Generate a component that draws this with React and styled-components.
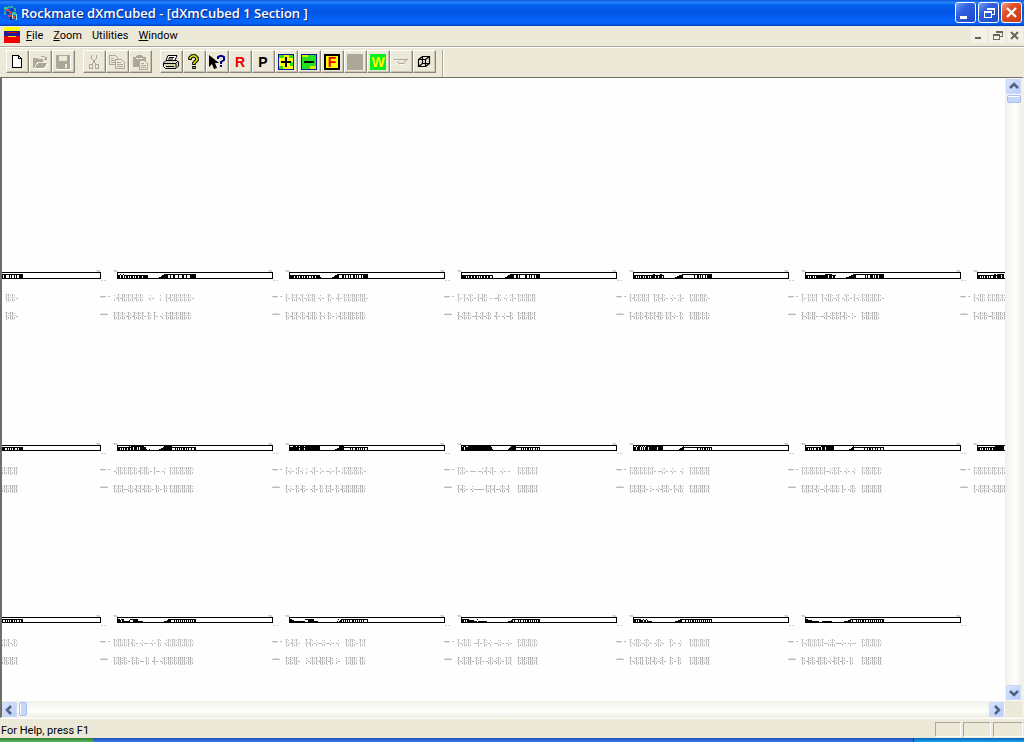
import React from "react";
import styled, { createGlobalStyle } from "styled-components";

const sections = [
  [
    {
      deck: "                                                         5=55===5=5==5=5==5555",
      top: "                             :  ||:|:. ",
      low: "                             |  |:||:. ",
    },
    {
      deck: "544=44=4-44-4-44-4-44-444-44444         11223445555==5==55===5===55==5===555555",
      top: ":.|.||:|:|.|:|:  .:.   :  |.|:||:|:|:|:. ",
      low: "|:|:|:.|:.|:|:|. |: |. .: |:||:|:|||:|: ",
    },
    {
      deck: "54444-44-4-44-4-44-4--4-44-444421 111    112234455===55=5==5=5==55=5=5==5=55555",
      top: "|. |:|.:|.:|:|| .:.  |:. .|. |:|:|||:|||. ",
      low: "|:.|:|.:|:.|:||: |.: |:. :.|:|:|||:|:||: ",
    },
    {
      deck: "54444-4-44-44-44-4-4-44-44-44--4         111223445555==55=5=====55==5=5==5=5555",
      top: "|. |.:|:. |.||: . ..|: .: :|. |:|:||:|| ",
      low: "|.:|:|:..|.:|.:|: .|. .:..|:  |:||:||:| ",
    },
    {
      deck: "544-4-4-44-4-44-4-4455-44-455-4         1122334445===========5==55=5=5==5=55555",
      top: "|.|:|:||:|  |:|.|:. .:. :|.   |:||:|||:. ",
      low: "|.:|:|:.|:|:|.||: |:|.:. |:   |:|||:|:|: ",
    },
    {
      deck: "544-4-44-4-444444444555=555-44-        112223344555=========5=5==555=5=55=55555",
      top: "|. |:|:|  |.:||:.:| .:|:. |.: |:||:||:|:. ",
      low: "|.:|:||. ..:|.:|:|:|.|:. :.   |:||:|||: ",
    },
    {
      deck: "544-4-4-44-4-4--455-5555=55",
      top: "|.:||: |:|:||:|:",
      low: "|.:|:|:..|:|||:|",
    },
  ],
  [
    {
      deck: "                                                         444--4-4-4-44--4-4444",
      top: "                             |:|:||:||",
      low: "                             |:||:|||| ",
    },
    {
      deck: "544-4-4-44-45-55=555=5=5555442112        12233455555555---4-4-4-4-44-4-4--4--44",
      top: ".:||:|:||:|:.|:||:. |.. .:  |:||:||:|||: ",
      low: "|:|:|..:|:.|:|.|:|:. |:. |: |:|||:||:||: ",
    },
    {
      deck: "5444555455-5555-5555555555555551             1223355555------4-4--44-4-4-4-4--4",
      top: "|.:. :|.: : .:|. :. ..:. |. :|:||:||:|:. ",
      low: "|.:. |:.|:. .:|. |: |:|. |:.|:||:|||:||: ",
    },
    {
      deck: "545=54455555555555555555555555421             123455555-----4-4-4-44-4-4--4-4-4",
      top: "|:|:. ... ..:.|.:|.  .:. .    |:|:||:|:| ",
      low: "|.|:. .:..... |:|.|..:|:.|    |:|||:||:| ",
    },
    {
      deck: "544=455=4=4=455=55555555=555551              123345-------------4--4-4-44-4-4-4",
      top: "|:||:|:|:|:|. ..::. .:.  .:   |:||:||:|| ",
      low: "|:|:||:|. :. .:.|:|:. |.:|:   |:||:|||:| ",
    },
    {
      deck: "544-4-4-4--44-44=555=55555555              122345----------4--4-44-4--4-4--4--4",
      top: "|:|:||:|:|:|..::|:|. .:. .:   |:||:||:|: ",
      low: "|:||:|.|:..:|.:|:|: |. .:|:   |:||:||:|| ",
    },
    {
      deck: "544-4-44-4-4-44-44555555555",
      top: "|:||:|:|:||:|:|:",
      low: "|.:|:|:|.:|:||:|",
    },
  ],
  [
    {
      deck: "                                                         4--4-4-4-44-4-4--4-44",
      top: "                             |:|:|.:|: ",
      low: "                             |:||:||:| ",
    },
    {
      deck: "5443-44222223---4444422222111                 12223444---4-4-4-4-4-4-4-4-4-4-44",
      top: "|:||:|:|.|:. .:.. .:. |: .:|:||:||:||:|: ",
      low: "|:||:|:. |:|:.. |: .|. .:|:||:|:||||:||: ",
    },
    {
      deck: "5443322222222222---44444422221111              12-234-4-4-4-4--44-4-4-4-4-4---4",
      top: "|:.|:|.   |.|:.:..::..:. .:   |:||:. |:| ",
      low: "|:|:||.   :.:|:|.||:|.|: :.   |:|||: ||: ",
    },
    {
      deck: "544-4-4433333222-22222222211111               122234-4---4-4--4-4-44-4-4-4-4-44",
      top: "|.:|:|: ..|. |:.: ..::. .:.   |:||:||:|: ",
      low: "|.:|:||. |:|. .:|:.:|:. |:|   |:||:|||:| ",
    },
    {
      deck: "544-4-4433-33-3222211111               1112223344---4--4-4-44-4-4-4-4-4-4-4-4-4",
      top: "|.:||:.:|:. .:|:.   |:. .:    |:||:||:|| ",
      low: "|.:|:|| |:|.|:.:|.  |:. |:    |:||:||:|| ",
    },
    {
      deck: "5443333222222211122222222221111111111112222334-4---4-4-4-44-4--4-4-4-4-4-4-4-44",
      top: "|.:||:|:|:|..::|:...:. .:..   |:||:||:|: ",
      low: "|:.|:|:.||:|:.:.|:|.|:. |:    |:||:||:|| ",
    },
  ],
];

const menus = [
  ["F", "ile"],
  ["Z", "oom"],
  ["", "Utilities"],
  ["W", "indow"],
];

const toolGroups = [
  [
    ["New", NewIcon],
    ["Open", OpenIcon, true],
    ["Save", SaveIcon, true],
  ],
  [
    ["Cut", CutIcon, true],
    ["Copy", CopyIcon, true],
    ["Paste", PasteIcon, true],
  ],
  [
    ["Print", PrintIcon],
    ["About", AboutIcon],
    ["Context help", ContextHelpIcon],
    ["R", () => <Letter color="#f00000">R</Letter>],
    ["P", () => <Letter color="#000">P</Letter>],
    ["Plus", PlusIcon],
    ["Minus", MinusIcon],
    ["F", () => <Letter color="#f00000" $back="#ff0" $edge="#000">F</Letter>],
    ["Blank", () => <Letter $back="#aca899" />],
    ["W", () => <Letter color="#ff0" $back="#00f020">W</Letter>],
    ["Level", LevelIcon],
    ["Cube", CubeIcon],
  ],
];

export default function App() {
  return (
    <>
      <GlobalStyle />
      <Frame>
        <TitleBar>
          <LogoIcon />
          <Title>Rockmate dXmCubed - [dXmCubed 1 Section ]</Title>
          <CaptionButton aria-label="Minimize">
            <svg width="19" height="19"><path d="M4 13h7v3H4z" fill="#fff" /></svg>
          </CaptionButton>
          <CaptionButton aria-label="Restore">
            <RestoreGlyph color="#fff" size={16} />
          </CaptionButton>
          <CaptionButton aria-label="Close" $danger>
            <svg width="19" height="19"><path d="M5 5l9 9M14 5l-9 9" stroke="#fff" strokeWidth="2.3" /></svg>
          </CaptionButton>
        </TitleBar>

        <MenuBar>
          <FlagIcon />
          <Menus>
            {menus.map(([key, rest]) => (
              <MenuItem key={rest}>
                <u>{key}</u>
                {rest}
              </MenuItem>
            ))}
          </Menus>
          <ChildButton aria-label="Minimize section">
            <svg width="15" height="16"><path d="M4 10h6v2H4z" fill="#666357" /></svg>
          </ChildButton>
          <ChildButton aria-label="Restore section">
            <RestoreGlyph color="#666357" size={15} />
          </ChildButton>
          <ChildButton aria-label="Close section">
            <svg width="15" height="16"><path d="M4 5l7 7M11 5l-7 7" stroke="#666357" strokeWidth="2" /></svg>
          </ChildButton>
        </MenuBar>

        <ToolBar>
          {toolGroups.map((group, i) => (
            <ToolGroup key={i}>
              {group.map(([name, Icon, off]) => (
                <ToolButton key={name} aria-label={name} disabled={off}>
                  <Icon />
                </ToolButton>
              ))}
            </ToolGroup>
          ))}
          <ToolEnd />
        </ToolBar>

        <Client>
          <Canvas>
            {sections.map((row, i) => (
              <SectionRow key={i} $tall={i === 0}>
                {row.map((section, j) => (
                  <Section key={j} {...section} depth={i === 0 ? 7 : 6} />
                ))}
              </SectionRow>
            ))}
          </Canvas>
          <VScroll>
            <ScrollButton aria-label="Scroll up"><Chevron d="M4 9l4-4 4 4" /></ScrollButton>
            <VThumb />
            <Track />
            <ScrollButton aria-label="Scroll down"><Chevron d="M4 6l4 4 4-4" /></ScrollButton>
          </VScroll>
          <HScroll>
            <ScrollButton aria-label="Scroll left"><Chevron d="M9 4L5 8l4 4" /></ScrollButton>
            <HThumb />
            <Track />
            <ScrollButton aria-label="Scroll right"><Chevron d="M6 4l4 4-4 4" /></ScrollButton>
          </HScroll>
          <Corner />
        </Client>

        <StatusBar>
          <Help>For Help, press F1</Help>
          <Pane $width={26} />
          <Pane $width={28} />
          <Pane $width={30} />
        </StatusBar>
        <TaskBar>
          <Start />
          <Tasks />
          <Tray />
        </TaskBar>
      </Frame>
    </>
  );
}

// digit: solid column of that height, "=" and "-": roof of the deck
function deckPath(deck, depth) {
  return [...deck]
    .map((c, x) => {
      if (c === " ") return "";
      if (c === "=") return `M${x} ${depth - 5}h1v1h-1z`;
      if (c === "-") return `M${x} ${depth - 4}h1v1h-1z`;
      return `M${x} ${depth - c}h1v${c}h-1z`;
    })
    .join("");
}

function marksPath(marks, y) {
  return [...marks]
    .map((c, i) => {
      const x = i * 2;
      if (c === "|") return `M${x} ${y}h1v3h-1zM${x} ${y + 4}h1v3h-1z`;
      if (c === ":") return `M${x} ${y + 1}h1v1h-1zM${x} ${y + 5}h1v2h-1z`;
      if (c === ".") return `M${x} ${y + 4}h2v1h-2z`;
      return "";
    })
    .join("");
}

// pale crossbars that join the strokes of the figures
function joinsPath(marks, y) {
  return [...marks]
    .map((c, i) => {
      const x = i * 2;
      if (c === "|") return `M${x - 1} ${y}h3v1h-3zM${x - 1} ${y + 3}h3v1h-3zM${x} ${y + 7}h2v1h-2z`;
      if (c === ":") return `M${x} ${y + 3}h2v1h-2z`;
      return "";
    })
    .join("");
}

function Section({ deck, top, low, depth }) {
  return (
    <Drawing width="172" height="56" viewBox="-17 -4 172 56" overflow="visible">
      <path d="M-4 -1.500h4M-3 -.5h4M151 -1.500h4M152 -.5h3M156 8.500h2M159 8.500h2" stroke="#cfcfcf" />
      <path d={`M.5 .5h155v${depth - 1}H.5z`} fill="none" stroke="#000" />
      <path d={deckPath(deck, depth)} />
      <g transform="translate(-3 0)">
        <path d={joinsPath(top, 22)} fill="#e2e2e2" />
        <path d={joinsPath(low, 40)} fill="#dcdcdc" />
        <path d={marksPath(top, 22)} fill="#bcbcbc" />
        <path d={marksPath(low, 40)} fill="#b2b2b2" />
      </g>
      <path d="M-17 24.500h6M-9 24.500h2M-17 42.500h8" stroke="#bdbdbd" />
      <path d="M-16 25.500h4M-16 41.500h6" stroke="#dedede" />
    </Drawing>
  );
}

function LogoIcon() {
  return (
    <Drawing width="16" height="16">
      <path d="M1 2h4v3H1zM9 7h4v3H9z" fill="#2fc98a" />
      <path d="M5 1h5v2H5zM1 6h2v4H1zM11 3h2v3h-2z" fill="#35a7a0" />
      <path d="M3 4h3v2H3zM6 6h2v3H6zM5 10h3v2H5zM10 11h2v3h-2z" fill="#d8455b" />
      <path d="M4 7h2v2H4zM8 4h2v2H8zM7 12h3v3H7z" fill="#122c6b" />
      <path d="M9 9h1v5H9zM13 9h1v6h-1z" fill="#9fe8d0" />
    </Drawing>
  );
}

function FlagIcon() {
  return (
    <Drawing width="16" height="16">
      <path d="M0 0h16v5H0z" fill="#ff0" />
      <path d="M0 4h16v6H0z" fill="#1a1c9c" />
      <path d="M0 9h16v7H0z" fill="#f00000" />
      <path d="M3 5h10v1H3zM4 9h8v2H4z" fill="#f00000" />
      <path d="M4 9h8v1H4z" fill="#ffd800" />
    </Drawing>
  );
}

function RestoreGlyph({ color, size }) {
  return (
    <Glyph width={size} height={size} viewBox="0 0 16 16">
      <path d="M6.500 5V3.500h7v6H11" fill="none" stroke={color} />
      <path d="M6 3h8v2H6zM3 6h8v2H3z" fill={color} />
      <path d="M3.500 7v5.500h7V7" fill="none" stroke={color} />
    </Glyph>
  );
}

function NewIcon() {
  return (
    <Drawing width="16" height="16">
      <path d="M3.500 1.500h6l3 3v9h-9z" fill="#fff" stroke="#000" />
      <path d="M9.500 1.500v3h3" fill="none" stroke="#000" />
    </Drawing>
  );
}

function OpenIcon() {
  return (
    <Drawing width="16" height="16">
      <path d="M1 4h4l1 1h5v3H5l-3 6H1zM6 9h10l-4 5H3zM9 2h4v1h2v3h-3V5h1V3H9z" fill="#aca899" />
      <path d="M3 14h10l3-5" fill="none" stroke="#fff" />
    </Drawing>
  );
}

function SaveIcon() {
  return (
    <Drawing width="16" height="16">
      <path d="M1 1h14v14H2l-1-1zM4 2v5h8V2zM10 10v4h2v-4z" fill="#aca899" fillRule="evenodd" />
      <path d="M2 15.500h13.500V2" fill="none" stroke="#fff" />
    </Drawing>
  );
}

function CutIcon() {
  return (
    <Drawing width="16" height="16">
      <g fill="none" stroke="#aca899">
        <path d="M5.500 1v3l4 6M10.500 1v3l-4 6" />
        <path d="M3.500 10.500h3v4h-3zM9.500 10.500h3v4h-3z" />
      </g>
    </Drawing>
  );
}

function CopyIcon() {
  return (
    <Drawing width="16" height="16">
      <g fill="#ece9d8" stroke="#aca899">
        <path d="M.5 1.500h6l2 2v7h-8zM2 4.500h3M2 6.500h5M2 8.500h5" />
        <path d="M6.500 5.500h6l3 3v6h-9zM8 8.500h4M8 10.500h6M8 12.500h6" />
      </g>
    </Drawing>
  );
}

function PasteIcon() {
  return (
    <Drawing width="16" height="16">
      <path d="M1 3h3l1-2h5l1 2h3v10H1z" fill="#aca899" />
      <path d="M4 4h7" stroke="#ece9d8" />
      <path d="M7.500 6.500h5l3 3v6h-8zM9 9.500h3M9 11.500h5M9 13.500h5" fill="#ece9d8" stroke="#aca899" />
    </Drawing>
  );
}

function PrintIcon() {
  return (
    <svg width="16" height="16">
      <path d="M5 1.500h9l-2 5H3z" fill="#fff" stroke="#000" />
      <path d="M3 6.500h11l1.500 1.500v4L13 14.500H2.500l-2-2V9z" fill="#d8d4c2" stroke="#000" />
      <path d="M1 9.500h12v4M13 9l2-2M3 12.500h8M6 3.500h5M5 5h5" fill="none" stroke="#000" />
      <path d="M8 11h3" stroke="#e8e000" />
    </svg>
  );
}

function AboutIcon() {
  return (
    <svg width="16" height="16">
      <path d="M4 6V4l2-2h3l2 2v2L8 9v2M8 12v3" fill="none" stroke="#000" strokeWidth="3.600" />
      <path d="M4 5V4l2-2h3l2 2v2L8 9v1M8 13v1" fill="none" stroke="#f4f000" strokeWidth="1.500" />
    </svg>
  );
}

function ContextHelpIcon() {
  return (
    <svg width="16" height="16">
      <path d="M0 1v12l3-3 2 5 3-1-2-5h4z" fill="#000" />
      <path d="M9 5V3l2-1h2l2 1v3l-3 2v2M12 11v2" fill="none" stroke="#000080" strokeWidth="2" />
    </svg>
  );
}

function PlusIcon() {
  return (
    <Drawing width="16" height="16">
      <path d="M.5 .5h15v15H.5z" fill="#ff0" stroke="#0a12a0" />
      <path d="M1 1h5v3H1zM12 8h3v4h-3zM1 12h4v3H1zM11 1h4v3h-4z" fill="#30e010" />
      <path d="M7 3h2v4h4v2H9v4H7V9H3V7h4z" fill="#000" />
    </Drawing>
  );
}

function MinusIcon() {
  return (
    <Drawing width="16" height="16">
      <path d="M.5 .5h15v15H.5z" fill="#20e020" stroke="#0a12a0" />
      <path d="M1 1h6v2H1zM9 12h6v3H9z" fill="#d8f000" />
      <path d="M3 7h10v2H3z" fill="#000" />
    </Drawing>
  );
}

function LevelIcon() {
  return (
    <svg width="16" height="16">
      <path d="M1 5.500h14M4 6l2 3.500h5L13 6" fill="none" stroke="#aca899" />
      <path d="M2 6.500h3M6 10.500h5" stroke="#fff" />
    </svg>
  );
}

function CubeIcon() {
  return (
    <svg width="16" height="16">
      <path d="M2.500 5.500h7v7h-7zM6.500 2.500h7v7h-7zM2.500 5.500l4-3M9.500 5.500l4-3M2.500 12.500l4-3M9.500 12.500l4-3" fill="none" stroke="#000" strokeWidth="1.200" />
    </svg>
  );
}

function Chevron({ d }) {
  return (
    <svg width="15" height="15">
      <path d={d} fill="none" stroke="#4d6185" strokeWidth="2.500" />
    </svg>
  );
}

const GlobalStyle = createGlobalStyle`
  * {
    box-sizing: border-box;
  }
  body {
    margin: 0;
    font-family: Roboto, "Liberation Sans", sans-serif;
    font-size: 11px;
    color: #000;
  }
  button {
    padding: 0;
    border: none;
    font: inherit;
    color: inherit;
  }
  svg {
    display: block;
    flex: none;
  }
`;

const Frame = styled.div`
  display: flex;
  flex-direction: column;
  height: 100vh;
  overflow: hidden;
  background-color: #ece9d8;
`;

const Drawing = styled.svg`
  shape-rendering: crispEdges;
`;

const Glyph = styled(Drawing)`
  margin: 0 auto;
`;

const TitleBar = styled.header`
  display: flex;
  align-items: center;
  gap: 2px;
  height: 26px;
  padding: 0 2px 1px 3px;
  background: linear-gradient(
    #0a50d8 0%,
    #2a86fa 8%,
    #0560ee 20%,
    #0455e4 50%,
    #0464fc 75%,
    #0462f6 90%,
    #0340c0 100%
  );
`;

const Title = styled.h1`
  flex: 1;
  margin: 0;
  font-family: "Open Sans", "Noto Sans", sans-serif;
  font-size: 13px;
  font-weight: 600;
  line-height: 24px;
  color: #fff;
  text-shadow: 1px 1px #0a2a80;
  white-space: nowrap;
`;

const CaptionButton = styled.button`
  display: flex;
  align-items: center;
  justify-content: center;
  width: 21px;
  height: 21px;
  border: 1px solid #fff;
  border-radius: 3px;
  background: ${(props) =>
    props.$danger
      ? "linear-gradient(135deg, #f0a088, #e04f28 35%, #c83c14)"
      : "linear-gradient(135deg, #7aa2f4, #2f62e0 35%, #1b48c8)"};
`;

const MenuBar = styled.nav`
  display: flex;
  align-items: center;
  gap: 2px;
  height: 21px;
  padding: 0 1px 2px 4px;
  border-bottom: 1px solid #aca899;
`;

const Menus = styled.div`
  display: flex;
  flex: 1;
`;

const MenuItem = styled.button`
  padding: 1px 5px 0;
  background: none;
  line-height: 17px;
  &:first-child {
    padding-left: 4px;
  }
`;

const ChildButton = styled.button`
  width: 16px;
  height: 16px;
  background-color: #f4f2e8;
`;

const ToolBar = styled.div`
  display: flex;
  gap: 8px;
  height: 30px;
  padding: 2px 6px 5px;
  border-top: 1px solid #fff;
`;

const ToolGroup = styled.div`
  display: flex;
`;

const ToolButton = styled.button`
  display: flex;
  align-items: center;
  justify-content: center;
  width: 23px;
  height: 23px;
  padding-right: 1px;
  border: 1px solid;
  border-color: #fff #8a8778 #8a8778 #fff;
  background-color: #ece9d8;
  box-shadow: inset -1px -1px #c8c4b2;
`;

const ToolEnd = styled.div`
  width: 2px;
  height: 27px;
  margin-left: -2px;
  border-left: 1px solid #aca899;
  background-color: #fff;
`;

const Letter = styled.span`
  display: flex;
  justify-content: center;
  width: 16px;
  height: 16px;
  border: 2px solid ${(props) => props.$edge || "transparent"};
  background-color: ${(props) => props.$back || "transparent"};
  color: ${(props) => props.color};
  font-family: "Liberation Sans", sans-serif;
  font-size: 14px;
  font-weight: 700;
  line-height: 13px;
`;

const Client = styled.main`
  display: grid;
  flex: 1;
  min-height: 0;
  grid-template-columns: 1fr 17px;
  grid-template-rows: 1fr 16px;
  border: 1px solid;
  border-color: #716f64 #f4f2e8 #f4f2e8 #716f64;
  border-width: 1px 2px 1px 2px;
  background-color: #fff;
`;

const Canvas = styled.div`
  display: flex;
  flex-direction: column;
  gap: 116px;
  min-width: 0;
  padding-top: 190px;
  overflow: hidden;
  background-color: #fefefe;
`;

const SectionRow = styled.div`
  display: flex;
  height: ${(props) => (props.$tall ? 57 : 56)}px;
  margin-left: -74px;
`;

const VScroll = styled.div`
  display: flex;
  flex-direction: column;
  align-items: center;
  padding: 1px 0;
  background: linear-gradient(to right, #f0f0ea, #fefefb 60%, #f0f0ea);
`;

const HScroll = styled.div`
  display: flex;
  align-items: center;
  padding-right: 1px;
  background: linear-gradient(#f0f0ea, #fefefb 60%, #f0f0ea);
`;

const ScrollButton = styled.button`
  width: 15px;
  height: 15px;
  border-radius: 2px;
  background: linear-gradient(135deg, #dbe5fe, #b8ccf8);
  box-shadow: inset 0 0 0 1px #cbd8fa;
`;

const Track = styled.div`
  flex: 1;
`;

const VThumb = styled.div`
  width: 14px;
  height: 8px;
  margin-top: 1px;
  border: 1px solid #a9bdf0;
  border-radius: 2px;
  background-color: #c6d5fc;
  box-shadow: inset 0 1px #fff;
`;

const HThumb = styled.div`
  width: 8px;
  height: 14px;
  margin-left: 2px;
  border: 1px solid #a9bdf0;
  border-radius: 2px;
  background-color: #c6d5fc;
  box-shadow: inset 1px 0 #fff;
`;

const Corner = styled.div`
  background-color: #ece9d8;
`;

const StatusBar = styled.footer`
  display: flex;
  gap: 2px;
  height: 20px;
  padding: 3px 1px 1px 1px;
  border-top: 1px solid #fff;
`;

const Help = styled.span`
  flex: 1;
  line-height: 17px;
`;

const Pane = styled.span`
  width: ${(props) => props.$width}px;
  border: 1px solid;
  border-color: #aca899 #fff #fff #aca899;
`;

const TaskBar = styled.div`
  display: flex;
  height: 4px;
`;

const Start = styled.div`
  width: 93px;
  background: linear-gradient(#2f7d35, #5fb55c);
`;

const Tasks = styled.div`
  flex: 1;
  background: linear-gradient(#1f4fb8, #3c7cf0);
`;

const Tray = styled.div`
  width: 111px;
  border-left: 1px solid #0b3f9c;
  background: linear-gradient(#0c62b8, #18a4f2);
`;
